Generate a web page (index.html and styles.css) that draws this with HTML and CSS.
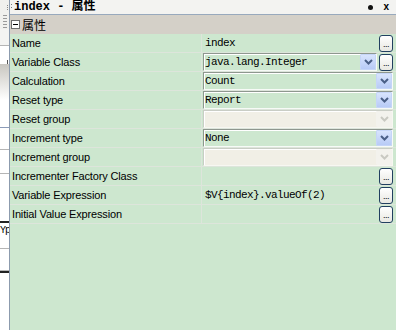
FILE: index.html
```html
<!DOCTYPE html>
<html>
<head>
<meta charset="utf-8">
<link rel="stylesheet" href="styles.css">
</head>
<body>
<div class="app">
  <div class="strip">
    <div class="s-top"><span class="s-grip"></span></div>
    <div class="s-ruler"></div>
    <div class="s-gap h16"></div>
    <div class="s-line gray"></div>
    <div class="s-gap h14"></div>
    <div class="s-mark"></div>
    <div class="s-shade"></div>
    <div class="s-gap h27"></div>
    <div class="s-line blue"></div>
    <div class="s-gap h21"></div>
    <div class="s-line gray"></div>
    <div class="s-gap h23"></div>
    <div class="s-line gray"></div>
    <div class="s-gap h47"></div>
    <div class="s-line black"></div>
    <div class="s-text">Y p</div>
    <div class="s-gap h9"></div>
    <div class="s-line gray"></div>
    <div class="s-gap h21"></div>
    <div class="s-line gray"></div>
    <div class="s-gap h8"></div>
    <div class="s-line black"></div>
  </div>
  <div class="panel">
    <div class="titlebar">
      <span class="grip"></span>
      <span class="title">index - 属性</span>
      <span class="controls"><span class="pin"></span><span class="close">x</span></span>
    </div>
    <div class="category">
      <span class="toggle"><span class="minus"></span></span>
      <span class="cat-label">属性</span>
    </div>
    <div class="rows">
      <div class="row">
        <div class="label">Name</div>
        <div class="value plain"><span class="mono">index</span><span class="ellipsis">...</span></div>
      </div>
      <div class="row">
        <div class="label">Variable Class</div>
        <div class="value">
          <div class="combo"><span class="mono">java.lang.Integer</span><span class="arrow"><svg width="9" height="6" viewBox="0 0 9 6"><path d="M1 1 L4.5 4.5 L8 1" fill="none" stroke="#4a5f86" stroke-width="2"/></svg></span></div>
          <span class="ellipsis">...</span>
        </div>
      </div>
      <div class="row">
        <div class="label">Calculation</div>
        <div class="value">
          <div class="combo"><span class="mono">Count</span><span class="arrow"><svg width="9" height="6" viewBox="0 0 9 6"><path d="M1 1 L4.5 4.5 L8 1" fill="none" stroke="#4a5f86" stroke-width="2"/></svg></span></div>
        </div>
      </div>
      <div class="row">
        <div class="label">Reset type</div>
        <div class="value">
          <div class="combo"><span class="mono">Report</span><span class="arrow"><svg width="9" height="6" viewBox="0 0 9 6"><path d="M1 1 L4.5 4.5 L8 1" fill="none" stroke="#4a5f86" stroke-width="2"/></svg></span></div>
        </div>
      </div>
      <div class="row">
        <div class="label">Reset group</div>
        <div class="value">
          <div class="combo disabled"><span class="mono"></span><span class="arrow"><svg width="9" height="6" viewBox="0 0 9 6"><path d="M1 1 L4.5 4.5 L8 1" fill="none" stroke="#c9c9c2" stroke-width="2"/></svg></span></div>
        </div>
      </div>
      <div class="row">
        <div class="label">Increment type</div>
        <div class="value">
          <div class="combo"><span class="mono">None</span><span class="arrow"><svg width="9" height="6" viewBox="0 0 9 6"><path d="M1 1 L4.5 4.5 L8 1" fill="none" stroke="#4a5f86" stroke-width="2"/></svg></span></div>
        </div>
      </div>
      <div class="row">
        <div class="label">Increment group</div>
        <div class="value">
          <div class="combo disabled"><span class="mono"></span><span class="arrow"><svg width="9" height="6" viewBox="0 0 9 6"><path d="M1 1 L4.5 4.5 L8 1" fill="none" stroke="#c9c9c2" stroke-width="2"/></svg></span></div>
        </div>
      </div>
      <div class="row">
        <div class="label">Incrementer Factory Class</div>
        <div class="value plain"><span class="mono"></span><span class="ellipsis">...</span></div>
      </div>
      <div class="row">
        <div class="label">Variable Expression</div>
        <div class="value plain"><span class="mono">$V{index}.valueOf(2)</span><span class="ellipsis">...</span></div>
      </div>
      <div class="row">
        <div class="label">Initial Value Expression</div>
        <div class="value plain"><span class="mono"></span><span class="ellipsis">...</span></div>
      </div>
    </div>
  </div>
</div>
</body>
</html>
```
FILE: styles.css
```css
* { box-sizing: border-box; }
body {
  margin: 0;
  width: 396px;
  height: 330px;
  overflow: hidden;
  background: #ffffff;
  font-family: "Liberation Sans", Arial, sans-serif;
  font-size: 11px;
  color: #000;
}
.app { display: flex; height: 330px; }

/* background strip on the left */
.strip {
  flex: none;
  width: 9px;
  display: flex;
  flex-direction: column;
  overflow: hidden;
  background: #ffffff;
}
.strip > * { flex: none; }
.s-top {
  height: 15px;
  background: #f1f1ee;
  display: flex;
  justify-content: flex-end;
  align-items: center;
  padding-right: 1px;
}
.s-grip { width: 1px; height: 6px; background: repeating-linear-gradient(#8a8a8a 0 1px, transparent 1px 2px); }
.s-ruler {
  height: 14px;
  background: #f1f1ee;
  background-image: repeating-linear-gradient(#9a9a9a 0 1px, transparent 1px 3px);
  background-size: 4px 100%;
  background-position: right 2px top;
  background-repeat: no-repeat;
}
.s-gap.h16 { height: 16px; background: #f4f4f2; }
.s-gap.h14 { height: 14px; }
.s-gap.h9 { height: 9px; }
.s-gap.h21 { height: 21px; }
.s-gap.h23 { height: 23px; }
.s-gap.h27 { height: 27px; }
.s-gap.h47 { height: 47px; }
.s-line { height: 1px; }
.s-line.gray { background: #b5b5b5; }
.s-line.blue { background: #8b9bb8; }
.s-line.black { height: 2px; background: #222; }
.s-mark { height: 4px; width: 1px; margin-left: 7px; background: #555; }
.s-shade { height: 36px; background: linear-gradient(#c8c6c0, #ffffff); }
.s-text {
  height: 16px;
  width: 9px;
  overflow: hidden;
  font-family: "Liberation Mono", monospace;
  font-size: 10px;
  line-height: 16px;
  white-space: nowrap;
  letter-spacing: -1px;
  word-spacing: -5px;
}

/* panel */
.panel {
  flex: 1;
  min-width: 0;
  border-left: 1px solid #8c9bae;
  background: #cde7cf;
  display: flex;
  flex-direction: column;
}
.titlebar {
  flex: none;
  height: 15px;
  border-bottom: 1px solid #98a9bd;
  background: #f3f3f1;
  display: flex;
  align-items: center;
  padding-left: 1px;
}
.grip {
  width: 1px;
  height: 6px;
  margin-right: 2px;
  background: repeating-linear-gradient(#7a7a7a 0 1px, transparent 1px 3px);
}
.title {
  font-family: "Liberation Mono", "Noto Sans CJK SC", monospace;
  font-weight: bold;
  font-size: 12px;
  line-height: 14px;
  white-space: nowrap;
}
.controls {
  margin-left: auto;
  display: flex;
  align-items: center;
  gap: 10px;
  padding-right: 7px;
}
.pin { width: 5px; height: 5px; border-radius: 50%; background: #111; }
.close { font-weight: bold; font-size: 10px; line-height: 10px; font-family: "Liberation Sans", sans-serif; }

.category {
  flex: none;
  height: 19px;
  background: #d4d0c8;
  display: flex;
  align-items: center;
  padding-left: 1px;
}
.toggle {
  width: 9px;
  height: 9px;
  border: 1px solid #6f6f6f;
  background: #fff;
  display: flex;
  align-items: center;
  justify-content: center;
}
.minus { width: 5px; height: 1px; background: #000; }
.cat-label {
  margin-left: 2px;
  font-family: "Noto Sans CJK SC", sans-serif;
  font-size: 12px;
  line-height: 14px;
}

.rows { display: flex; flex-direction: column; }
.row {
  display: grid;
  grid-template-columns: 192px 1fr;
  height: 19px;
}
.label {
  border-right: 1px solid #dde5db;
  border-bottom: 1px solid #dde5db;
  padding-left: 2px;
  padding-top: 1px;
  line-height: 17px;
  white-space: nowrap;
  letter-spacing: -0.15px;
}
.value {
  border-bottom: 1px solid #dde5db;
  display: flex;
  align-items: center;
  padding: 0 3px 0 1px;
  min-width: 0;
}
.value.plain { padding-left: 3px; }
.mono {
  font-family: "Liberation Mono", "DejaVu Sans Mono", monospace;
  font-size: 11px;
  letter-spacing: -0.6px;
  white-space: nowrap;
  line-height: 15px;
  padding-top: 1px;
}
.combo {
  flex: 1;
  height: 18px;
  display: flex;
  align-items: center;
  border: 1px solid;
  border-color: #8e978f #f7faf7 #f7faf7 #8e978f;
  box-shadow: inset 1px 1px 0 #ffffff;
  background: #cde7cf;
  padding-left: 1px;
}
.combo .mono { flex: 1; }
.arrow {
  flex: none;
  width: 16px;
  height: 16px;
  display: flex;
  align-items: center;
  justify-content: center;
  background: linear-gradient(#d8e4fd, #b8cbf6);
  border: 1px solid #c5d5f8;
  border-radius: 1px;
}
.combo.disabled {
  background: #f1efe6;
  border-color: #c9cdc5 #f7f7f2 #f7f7f2 #c9cdc5;
}
.combo.disabled .arrow {
  background: #f3f2ed;
  border-color: #f3f2ed;
}
.ellipsis {
  flex: none;
  margin-left: auto;
  width: 14px;
  height: 17px;
  border: 1px solid #213f60;
  border-radius: 3px;
  background: linear-gradient(#ffffff, #e8e8e2);
  font-size: 9px;
  line-height: 9px;
  text-align: center;
  display: flex;
  align-items: flex-end;
  justify-content: center;
  padding-bottom: 2px;
  letter-spacing: -0.5px;
}
.combo + .ellipsis { margin-left: 2px; }
```
